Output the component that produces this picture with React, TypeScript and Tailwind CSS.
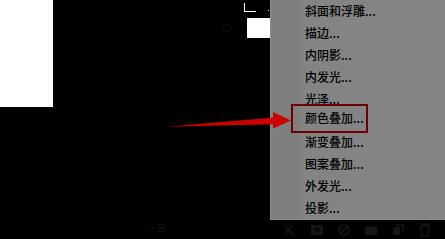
import React from "react";

const items = [
  "斜面和浮雕...",
  "描边...",
  "内阴影...",
  "内发光...",
  "光泽...",
  "颜色叠加...",
  "渐变叠加...",
  "图案叠加...",
  "外发光...",
  "投影...",
];

function Toolbar() {
  const c = "#161616";
  return (
    <div className="flex h-[19px] items-center bg-black">
      <div className="w-[150px]" />
      <svg width="16" height="10" viewBox="0 0 16 10" className="mt-[-4px]">
        <path d="M1 3l2 2 2-2" stroke={c} fill="none" strokeWidth="1" />
        <path d="M7 2h8M7 5h8M7 8h8" stroke={c} strokeWidth="1" />
      </svg>
      <div className="w-[117px]" />
      <div className="flex items-center gap-[13px]">
        <svg width="14" height="14" viewBox="0 0 14 14">
          <path d="M2 3l7 8M9 3l-7 8M10 12l2 0" stroke={c} fill="none" strokeWidth="1.5" />
        </svg>
        <svg width="14" height="14" viewBox="0 0 14 14">
          <rect x="1" y="2" width="12" height="10" fill={c} />
          <circle cx="7" cy="7" r="3" fill="#0a0a0a" />
        </svg>
        <svg width="14" height="14" viewBox="0 0 14 14">
          <circle cx="7" cy="7" r="5" stroke={c} fill="none" strokeWidth="1.5" />
          <path d="M3 11L11 3" stroke={c} strokeWidth="1.5" />
        </svg>
        <svg width="14" height="14" viewBox="0 0 14 14">
          <path d="M1 3h5l1 1h6v8H1z" fill={c} />
        </svg>
        <svg width="14" height="14" viewBox="0 0 14 14">
          <path d="M2 4h7v8H2z" fill={c} />
          <path d="M5 2h7v7" stroke={c} fill="none" strokeWidth="1.5" />
        </svg>
        <svg width="14" height="14" viewBox="0 0 14 14">
          <path d="M2 3h10M5 3V1h4v2M3 4l1 9h6l1-9" stroke={c} fill="none" strokeWidth="1.5" />
        </svg>
      </div>
    </div>
  );
}

export default function App() {
  return (
    <div
      className="relative flex h-[239px] w-[445px] flex-col overflow-hidden bg-black"
      style={{ fontFamily: '"Noto Sans CJK SC", "Noto Sans", sans-serif' }}
    >
      <div className="flex h-[220px]">
        {/* canvas area */}
        <div className="relative w-[270px]">
          <div className="h-[107px] w-[53px] bg-white" />
          {/* selection corner */}
          <div className="absolute left-[244px] top-[3px] h-[9px] w-[12px] border-b border-l border-white" />
          <div className="absolute left-[268px] top-[10px] h-[1px] w-[1px] bg-white" />
          <div className="absolute left-[247px] top-[18px] h-[20px] w-[23px] bg-white" />
          <svg className="absolute left-[222px] top-[23px]" width="10" height="10" viewBox="0 0 10 10">
            <circle cx="5" cy="5" r="3.5" stroke="#111111" fill="none" strokeWidth="1" />
          </svg>
        </div>
        {/* context menu */}
        <div className="flex h-[220px] w-[175px] border-b border-l border-[#8e8e8e] bg-[#848484]">
          <div className="w-[30px] bg-[#7f7f7f]" />
          <div className="-mt-[1.5px] flex flex-col pl-[4px]">
            {items.map((t, i) => (
              <div key={t} className="flex h-[21.8px] items-center">
                <div
                  className={
                    i === 5
                      ? "-ml-[14px] flex h-[29px] w-[77px] items-center border-2 border-[#6e0000] pl-[12px]"
                      : ""
                  }
                >
                  <span className="whitespace-nowrap text-[12px] font-medium leading-none text-black">{t}</span>
                </div>
              </div>
            ))}
          </div>
        </div>
      </div>
      <Toolbar />
      {/* red arrow */}
      <svg className="absolute left-0 top-0" width="445" height="239" viewBox="0 0 445 239">
        <polygon points="166,126.8 274,117.5 274,124.3" fill="#cc0000" />
        <polygon points="273,112 291,120.5 273,128.5" fill="#cc0000" />
      </svg>
    </div>
  );
}
